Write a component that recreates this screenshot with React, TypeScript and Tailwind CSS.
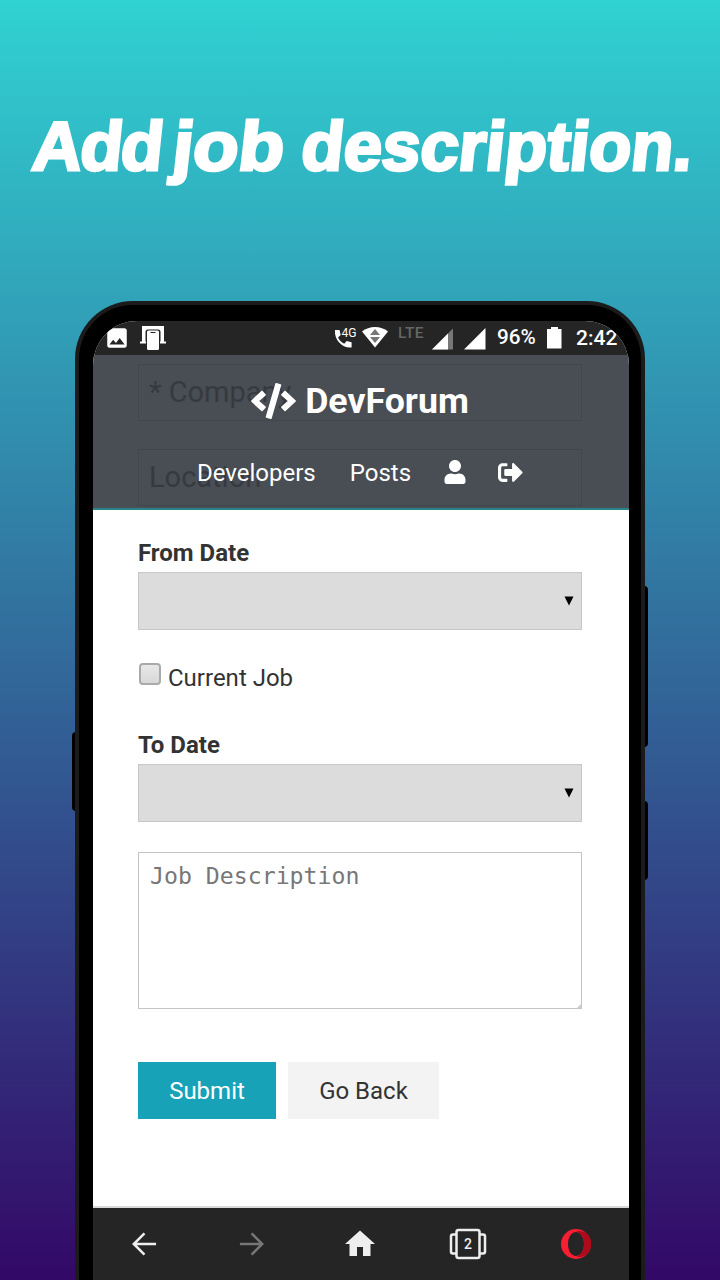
import type { ReactNode } from "react";
import { FaCode, FaUser, FaSignOutAlt } from "react-icons/fa";
import { MdHome, MdImage } from "react-icons/md";

function StatusBar() {
  return (
    <div className="flex h-[34px] w-full shrink-0 items-center bg-[#252525] text-[21px] font-medium text-white">
      <MdImage className="ml-[11px] mt-[-1px] size-[26px]" />
      <svg className="ml-[10px]" width="26" height="26" viewBox="0 0 26 26">
        <path d="M2 1h22v16H2z" fill="#fff" />
        <path d="M5.500 24V7q0-2.500 2.500-2.500h10q2.500 0 2.500 2.500v17z" fill="#252525" />
        <rect x="7" y="5.500" width="12" height="19.500" rx="1.500" fill="#fff" />
        <path d="M10.500 7.500h5" stroke="#252525" />
        <path d="M0 17.500h6M20 17.500h6" stroke="#fff" strokeWidth="2" />
      </svg>
      <svg className="ml-[167px] mt-[-1px]" width="24" height="24" viewBox="0 0 24 24">
        <path d="M2 4h4.500l1.200 5-2.700 2.500c1.500 3 3.300 4.800 6.200 6.300l2.500-2.700 4.900 1.200V21.500C9.500 22.500 1 14 2 4z" fill="#fff" />
        <text x="8.500" y="11" fill="#fff" fontSize="13" fontFamily="Roboto, sans-serif" fontWeight="400" textLength="15" lengthAdjust="spacingAndGlyphs">4G</text>
      </svg>
      <svg className="ml-[4px] mt-[-2px]" width="28" height="24" viewBox="0 0 28 24">
        <path d="M1 6.500C8 .5 20 .5 27 6.500L14 22.500z" fill="#fff" />
        <path d="M14 4l5 6H9zM9 12h10l-5 6z" fill="#777" />
      </svg>
      <span className="ml-[9px] mt-[-9px] w-[27px] text-[15.500px] leading-none tracking-[0.400px] text-[#666]">LTE</span>
      <svg className="ml-[7px] mt-[1px]" width="22" height="22" viewBox="0 0 22 22">
        <path d="M0 21.500L21 .5v21z" fill="#777" />
        <path d="M0 21.500L16 5.500v16z" fill="#fff" />
      </svg>
      <svg className="ml-[10px] mt-[1px]" width="22" height="22" viewBox="0 0 22 22">
        <path d="M0 21.500L21.500 0v21.500z" fill="#fff" />
      </svg>
      <span className="ml-[11px] w-[41px] whitespace-nowrap text-[20.700px]">96%</span>
      <svg className="ml-[9px]" width="15" height="24" viewBox="0 0 15 24">
        <path d="M0 3h4V1h7v2h3.500v19.500H0z" fill="#fff" />
      </svg>
      <span className="ml-[14px] mt-[2px] whitespace-nowrap text-[21px]">2:42</span>
    </div>
  );
}

function Header() {
  return (
    <header className="absolute inset-x-0 top-0 flex h-[155px] flex-col items-center border-b-2 border-[#2a8389] text-white">
      <div className="ml-[-2px] mt-[21px] flex h-[52px] items-center gap-[9px] text-[35.700px] font-bold">
        <FaCode className="mt-[-2px] h-[36px] w-[45px]" />
        <span>DevForum</span>
      </div>
      <nav className="ml-[-2px] mt-[29px] flex h-[32px] items-center text-[24px]">
        <span>Developers</span>
        <span className="ml-[34px]">Posts</span>
        <FaUser className="ml-[33px] mt-[-2px] h-[24px] w-[22px]" />
        <FaSignOutAlt className="ml-[32px] mt-[-2px] size-[25px]" />
      </nav>
    </header>
  );
}

function CoveredField({ children }: { children: ReactNode }) {
  return (
    <div className="flex h-[57px] items-center border border-[#43474d] pl-[10px] text-[29px] text-[#363a40]">
      {children}
    </div>
  );
}

function DateField({ label }: { label: string }) {
  return (
    <div>
      <div className="h-[33px] text-[24px] font-bold leading-[28px]">{label}</div>
      <div className="flex h-[58px] items-center justify-end border border-[#c8c8c8] bg-[#dcdcdc] pr-[7px]">
        <svg width="10" height="10" viewBox="0 0 10 10">
          <path d="M.5.5h9L5 9.500z" fill="#000" />
        </svg>
      </div>
    </div>
  );
}

function BottomBar() {
  return (
    <div className="ml-[-3px] grid h-[74px] w-[540px] shrink-0 grid-cols-5 place-items-center border-t-2 border-[#d9d9d9] bg-[#252525]">
      <svg width="26" height="26" viewBox="0 0 28 28" fill="none" stroke="#eee" strokeWidth="2.700">
        <path d="M14.500 2.500L3 14l11.500 11.500M3 14h24" />
      </svg>
      <svg width="26" height="26" viewBox="0 0 28 28" fill="none" stroke="#777" strokeWidth="2.700">
        <path d="M13.500 2.500L25 14 13.500 25.500M25 14H1" />
      </svg>
      <MdHome className="size-[36px] text-[#eee]" />
      <svg width="38" height="32" viewBox="0 0 38 32" fill="none" stroke="#eee" strokeWidth="2.500">
        <path d="M7.500 6.500H4q-2 0-2 2v15q0 2 2 2h3.500M30.500 6.500H34q2 0 2 2v15q0 2-2 2h-3.500" />
        <rect x="7.500" y="2" width="23" height="28" rx="2" />
        <text x="19" y="21" textAnchor="middle" stroke="none" fill="#eee" fontSize="14" fontFamily="Roboto, sans-serif" fontWeight="500">2</text>
      </svg>
      <svg width="30" height="30" viewBox="0 0 30 30">
        <path fillRule="evenodd" d="M15 0a15 15 0 1 0 0 30 15 15 0 1 0 0-30zM15 3c4.500 0 8 5 8 12s-3.500 12-8 12-8-5-8-12S10.500 3 15 3z" fill="#f81f33" />
        <path d="M15 3C18 1 22 2 25 4c7 6 7 16 0 22-3 2-7 3-10 1 4.500 0 8-5 8-12S19.500 3 15 3z" fill="#ae0a1c" />
      </svg>
    </div>
  );
}

export default function App() {
  return (
    <div className="relative flex h-[1280px] w-[720px] flex-col items-center overflow-hidden bg-[linear-gradient(#30d2d2,#330867)] font-['Roboto',sans-serif] text-[#333]">
      <h1 className="flex h-[301px] w-full shrink-0 whitespace-nowrap pl-[33px] pt-[104px] font-['Liberation_Sans',sans-serif] text-[69px] font-bold leading-[86px] text-white [-webkit-text-stroke:3px_white]">
        <span className="block h-[86px] w-[140px] -skew-x-6 tracking-[-1.800px]">Add</span>
        <span className="block h-[86px] w-[129px] origin-left -skew-x-6 scale-x-[1.08]">job</span>
        <span className="block h-[86px] -skew-x-6">description.</span>
      </h1>
      <div className="relative w-[570px] grow">
        <i className="absolute left-[-3px] top-[431px] h-[79px] w-[8px] rounded-sm bg-black" />
        <i className="absolute right-[-3px] top-[285px] h-[161px] w-[8px] rounded-sm bg-black" />
        <i className="absolute right-[-3px] top-[500px] h-[79px] w-[8px] rounded-sm bg-black" />
        <div className="relative h-full rounded-t-[58px] bg-[#1b1b1b] px-[4px] pt-[4px]">
          <div className="h-full rounded-t-[54px] bg-black pl-[14px] pr-[12px] pt-[16px]">
            <main className="flex h-full flex-col overflow-hidden rounded-t-[44px] bg-white">
              <StatusBar />
              <div className="relative grow">
                <div className="h-[155px] bg-[#494d54] pl-[45px] pr-[47px] pt-[9px]">
                  <CoveredField>* Company</CoveredField>
                  <div className="h-[28px]" />
                  <CoveredField>Location</CoveredField>
                </div>
                <Header />
                <form className="pl-[45px] pr-[47px] pt-[29px]">
                  <DateField label="From Date" />
                  <div className="mt-[30px] flex h-[36px] items-center">
                    <span className="mb-[8px] ml-[1px] size-[22px] rounded-[4px] border-2 border-[#aaa] bg-linear-to-b from-[#e8e8e8] to-[#d8d8d8]" />
                    <span className="ml-[7px] text-[24px]">Current Job</span>
                  </div>
                  <div className="h-[35px]" />
                  <DateField label="To Date" />
                  <div className="relative mt-[30px] h-[157px] border border-[#c4c4c4] pl-[11px] pt-[9px] font-['DejaVu_Sans_Mono',monospace] text-[23.200px] leading-[28px] text-[#777]">
                    Job Description
                    <i className="absolute bottom-0 right-0 border-b-4 border-l-4 border-b-[#ccc] border-l-transparent" />
                  </div>
                  <div className="mt-[53px] flex gap-[12px] text-[24px]">
                    <div className="flex h-[57px] w-[138px] items-center justify-center bg-[#18a2b8] text-white">Submit</div>
                    <div className="flex h-[57px] w-[151px] items-center justify-center bg-[#f3f3f3]">Go Back</div>
                  </div>
                </form>
              </div>
              <BottomBar />
            </main>
          </div>
        </div>
      </div>
    </div>
  );
}
